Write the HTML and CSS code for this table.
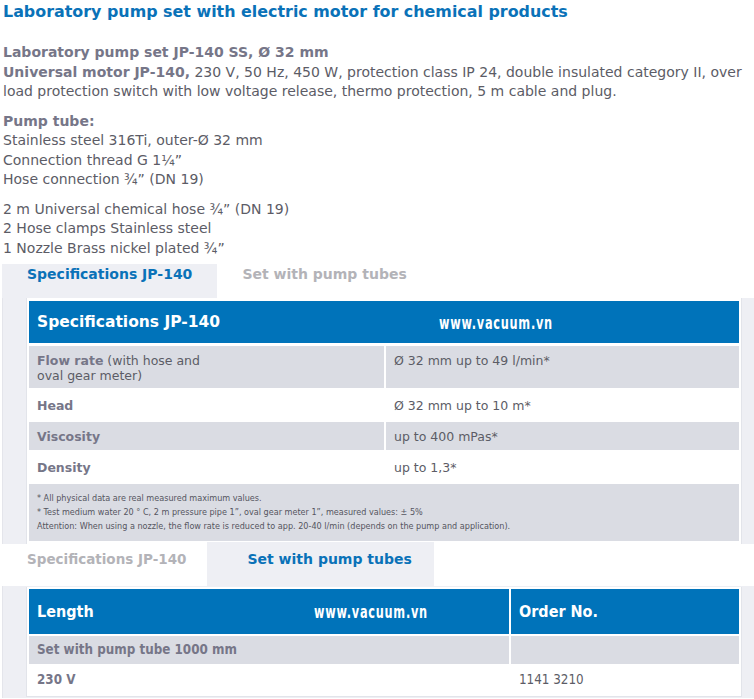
FILE: index.html
```html
<!DOCTYPE html>
<html>
<head>
<meta charset="utf-8">
<link rel="stylesheet" href="styles.css">
</head>
<body>
<div class="page">
  <h1 class="title">Laboratory pump set with electric motor for chemical products</h1>
  <p class="para">
    <b>Laboratory pump set JP-140 SS, Ø 32 mm</b><br>
    <b>Universal motor JP-140,</b> 230 V, 50 Hz, 450 W, protection class IP 24, double insulated category II, over load protection switch with low voltage release, thermo protection, 5 m cable and plug.
  </p>
  <p class="para">
    <b>Pump tube:</b><br>
    Stainless steel 316Ti, outer-Ø 32 mm<br>
    Connection thread G 1¼”<br>
    Hose connection ¾” (DN 19)
  </p>
  <p class="para">
    2 m Universal chemical hose ¾” (DN 19)<br>
    2 Hose clamps Stainless steel<br>
    1 Nozzle Brass nickel plated ¾”
  </p>

  <div class="tabs tabs-top">
    <div class="tab active">Specifications JP-140</div>
    <div class="tab">Set with pump tubes</div>
  </div>
  <div class="panel panel-spec">
    <table class="spec">
      <colgroup><col class="c1"><col></colgroup>
      <tr><th colspan="2" class="head"><span>Specifications JP-140</span><span class="mark">www.vacuum.vn</span></th></tr>
      <tr class="gray tall"><td><b>Flow rate</b> (with hose and<br>oval gear meter)</td><td>Ø 32 mm up to 49 l/min*</td></tr>
      <tr><td><b>Head</b></td><td>Ø 32 mm up to 10 m*</td></tr>
      <tr class="gray"><td><b>Viscosity</b></td><td>up to 400 mPas*</td></tr>
      <tr><td><b>Density</b></td><td>up to 1,3*</td></tr>
      <tr class="gray"><td colspan="2" class="notes">* All physical data are real measured maximum values.<br>* Test medium water 20 ° C, 2 m pressure pipe 1”, oval gear meter 1”, measured values: ± 5%<br>Attention: When using a nozzle, the flow rate is reduced to app. 20-40 l/min (depends on the pump and application).</td></tr>
    </table>
  </div>

  <div class="tabs tabs-bottom">
    <div class="tab first">Specifications JP-140</div>
    <div class="tab active second">Set with pump tubes</div>
  </div>
  <div class="panel panel-order">
    <table class="order">
      <colgroup><col class="o1"><col></colgroup>
      <tr><th class="head"><span>Length</span><span class="mark mark2">www.vacuum.vn</span></th><th class="head">Order No.</th></tr>
      <tr class="gray"><td><b>Set with pump tube 1000 mm</b></td><td></td></tr>
      <tr><td><b>230 V</b></td><td>1141 3210</td></tr>
    </table>
  </div>
</div>
</body>
</html>
```
FILE: styles.css
```css
html, body {
  margin: 0;
  padding: 0;
  background: #fff;
}
body {
  font-family: "DejaVu Sans", Verdana, sans-serif;
  font-size: 14px;
  color: #5c5c66;
}
.page {
  padding: 0 0 0 3px;
  overflow: hidden;
}
.title {
  margin: 0;
  padding-top: 1px;
  font-size: 15.9px;
  line-height: 22px;
  color: #0a72b8;
  font-weight: bold;
}
.para {
  margin: 0;
  line-height: 19.5px;
}
.title + .para { margin-top: 20px; }
.para + .para { margin-top: 10px; }
.para b { color: #767688; }

.tabs {
  display: flex;
  margin-left: -1px;
}
.tabs-top {
  height: 34px;
  margin-top: 6px;
}
.tabs-bottom {
  height: 44px;
  margin-top: -1px;
}
.tab {
  padding: 1px 25px 0;
  line-height: 19px;
  font-weight: bold;
  font-size: 14px;
  color: #b3b3b8;
  white-space: nowrap;
}
.tabs .tab.active {
  background: #eeeff4;
  color: #0a72b8;
}
.tab.first {
  padding: 8px 21px 0 25px;
  font-size: 13.5px;
}
.tab.second {
  padding: 8px 22px 0 40px;
}

.panel {
  background: #eeeff4;
  margin-left: -1px;
  padding: 0 12px 0 23px;
  border-left: 1px solid #e4e5eb;
}
.panel-order { padding-top: 1px; padding-bottom: 1px; }
table {
  width: 100%;
  border-collapse: separate;
  border-spacing: 2px;
  background: #fff;
  border: 1px solid #e2e4ea;
  border-top: 0;
}
.spec {
  border-spacing: 2px 3px;
  border-bottom: 0;
  margin-bottom: -2px;
}
.c1 { width: 355px; }
.o1 { width: 480px; }
td, th {
  text-align: left;
  vertical-align: top;
  padding: 6px 8px;
  font-weight: normal;
}
th.head {
  background: #0073ba;
  color: #fff;
  font-weight: bold;
  font-size: 15.5px;
  height: 42px;
  vertical-align: middle;
  position: relative;
  padding: 0 8px;
}
.order th.head {
  font-family: "DejaVu Sans Condensed", "DejaVu Sans", sans-serif;
  font-size: 16px;
  height: 45px;
}
.mark {
  position: absolute;
  left: 410px;
  top: 12px;
  font-family: "DejaVu Sans Condensed", sans-serif;
  font-weight: bold;
  font-size: 17px;
  letter-spacing: 1px;
  transform: scaleX(0.74);
  transform-origin: left center;
}
.mark2 { left: 285px; top: 13px; }
.spec td { font-size: 12.5px; line-height: 15px; padding: 7px 8px 5px; }
.spec tr td { height: 16px; }
.spec tr.tall td { height: 30px; }
td b { color: #767688; }
tr.gray td { background: #dadce3; }
.spec td.notes {
  font-family: "DejaVu Sans Condensed", "DejaVu Sans", sans-serif;
  font-size: 9px;
  line-height: 14px;
  padding: 7px 8px 8px;
  color: #55555f;
}
.order td {
  font-family: "DejaVu Sans Condensed", "DejaVu Sans", sans-serif;
  font-size: 13.3px;
  padding: 6px 8px 6px;
  height: 16px;
}
```
